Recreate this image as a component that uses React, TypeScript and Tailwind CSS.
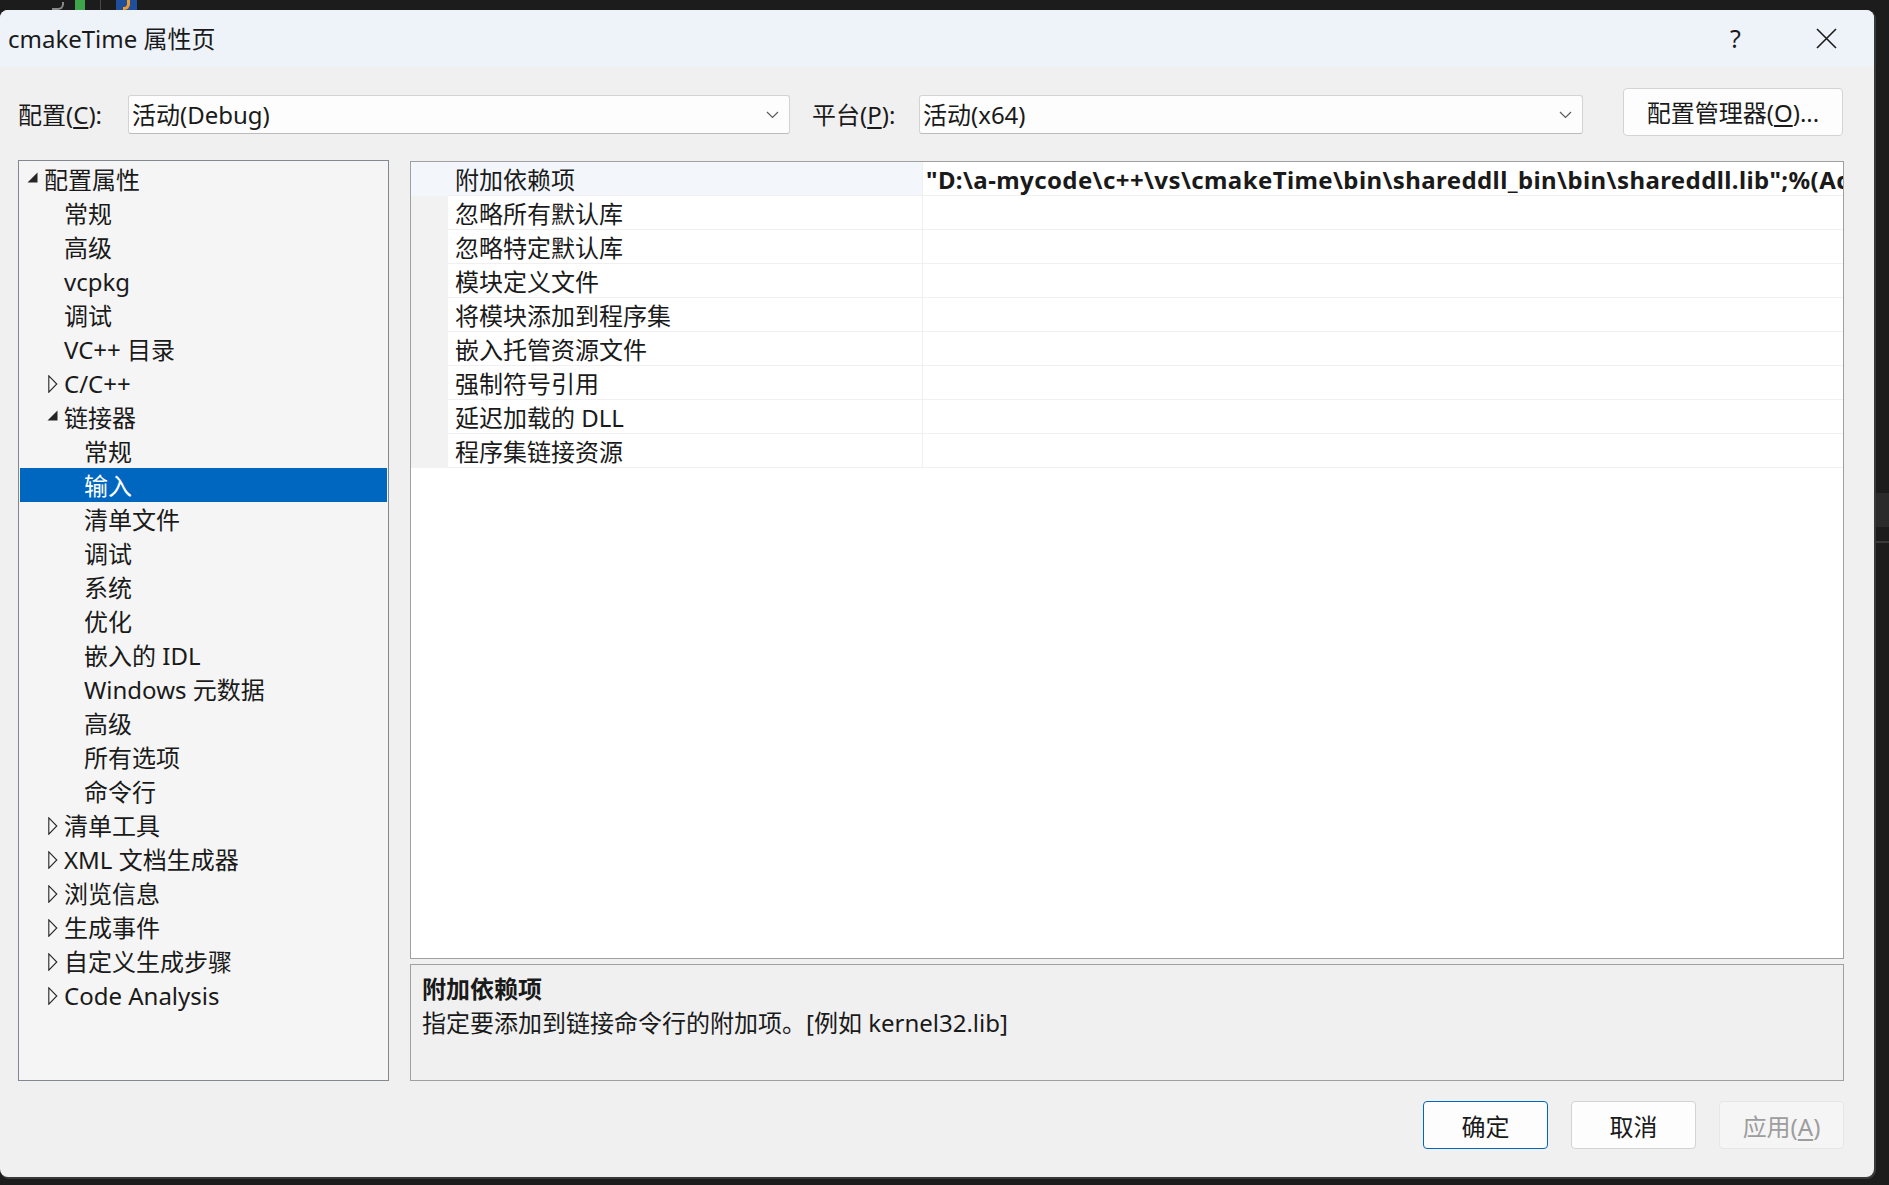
import React from "react";

type TreeItem = {
  label: string;
  level: number;
  state?: "open" | "closed";
  selected?: boolean;
};

const tree: TreeItem[] = [
  { label: "配置属性", level: 0, state: "open" },
  { label: "常规", level: 1 },
  { label: "高级", level: 1 },
  { label: "vcpkg", level: 1 },
  { label: "调试", level: 1 },
  { label: "VC++ 目录", level: 1 },
  { label: "C/C++", level: 1, state: "closed" },
  { label: "链接器", level: 1, state: "open" },
  { label: "常规", level: 2 },
  { label: "输入", level: 2, selected: true },
  { label: "清单文件", level: 2 },
  { label: "调试", level: 2 },
  { label: "系统", level: 2 },
  { label: "优化", level: 2 },
  { label: "嵌入的 IDL", level: 2 },
  { label: "Windows 元数据", level: 2 },
  { label: "高级", level: 2 },
  { label: "所有选项", level: 2 },
  { label: "命令行", level: 2 },
  { label: "清单工具", level: 1, state: "closed" },
  { label: "XML 文档生成器", level: 1, state: "closed" },
  { label: "浏览信息", level: 1, state: "closed" },
  { label: "生成事件", level: 1, state: "closed" },
  { label: "自定义生成步骤", level: 1, state: "closed" },
  { label: "Code Analysis", level: 1, state: "closed" },
];

const props = [
  "附加依赖项",
  "忽略所有默认库",
  "忽略特定默认库",
  "模块定义文件",
  "将模块添加到程序集",
  "嵌入托管资源文件",
  "强制符号引用",
  "延迟加载的 DLL",
  "程序集链接资源",
];

const indent = ["pl-[4px]", "pl-[24px]", "pl-[44px]"];

function Chevron() {
  return (
    <svg width="13" height="8" viewBox="0 0 13 8" className="shrink-0">
      <path d="M1 1 L6.5 6.5 L12 1" fill="none" stroke="#5c5c5c" strokeWidth="1.2" />
    </svg>
  );
}

function Toggle({ state, selected }: { state?: "open" | "closed"; selected?: boolean }) {
  const c = selected ? "#ffffff" : "#262626";
  return (
    <div className="w-[20px] h-full flex items-center shrink-0">
      {state === "open" && (
        <svg width="11" height="11" viewBox="0 0 11 11" className="ml-[3px] mt-[-3px]">
          <path d="M10.5 0.5 L10.5 10.5 L0.5 10.5 Z" fill={c} />
        </svg>
      )}
      {state === "closed" && (
        <svg width="10" height="18" viewBox="0 0 10 18" className="ml-[4px] mt-[2px]">
          <path d="M0.8 0.8 L8.8 9 L0.8 17.2 Z" fill="none" stroke={c} strokeWidth="1.1" />
        </svg>
      )}
    </div>
  );
}

export default function App() {
  return (
    <div className="w-[1889px] h-[1185px] bg-[#1c1c1c] overflow-hidden flex flex-col font-['Noto_Sans','Noto_Sans_CJK_SC',sans-serif] text-[24px] text-[#1a1a1a]">
      {/* background window bits above the dialog */}
      <div className="h-[10px] flex items-end shrink-0">
        <div className="ml-[52px] w-[12px] h-[8px] rounded-br-[6px] border-r-[2px] border-b-[2px] border-[#8a8a8a]" />
        <div className="ml-[11px] w-[10px] h-[10px] bg-[#3ea64a]" />
        <div className="ml-[15px] w-[1px] h-[10px] bg-[#4a4a4a]" />
        <div className="ml-[15px] w-[21px] h-[10px] bg-[#1f4f9a] flex justify-center">
          <div className="w-[7px] h-[10px] rounded-br-[6px] border-r-[3px] border-b-[3px] border-[#f09a2a]" />
        </div>
      </div>

      <div className="flex flex-1 min-h-0">
        <div className="w-[1874px] h-[1167px] shrink-0 bg-[#f0f0f0] rounded-[8px] overflow-hidden flex flex-col shadow-[1px_1px_0_1px_#3a3a3a]">
          {/* title bar */}
          <div className="h-[57px] bg-[#eef2f9] flex items-center pl-[8px] pr-[2px] shrink-0">
            <span className="leading-none">cmakeTime 属性页</span>
            <div className="ml-auto flex h-full">
              <div className="w-[91px] h-full flex items-center justify-center text-[25px]">?</div>
              <div className="w-[91px] h-full flex items-center justify-center">
                <svg width="21" height="21" viewBox="0 0 21 21">
                  <path d="M1 1 L20 20 M20 1 L1 20" stroke="#1a1a1a" strokeWidth="1.6" />
                </svg>
              </div>
            </div>
          </div>

          <div className="flex-1 flex flex-col pl-[18px] pr-[30px]">
            {/* configuration row */}
            <div className="mt-[21px] h-[48px] flex items-start">
              <div className="mt-[7px] h-[39px] flex items-center">
                <span className="w-[110px] whitespace-nowrap">
                  配置(<span className="underline underline-offset-[3px]">C</span>):
                </span>
                <div className="w-[662px] h-[39px] bg-[#fdfdfd] border border-[#d3d3d3] border-b-[#bcbcbc] rounded-[3px] flex items-center pl-[3px] pr-[10px]">
                  <span className="flex-1 whitespace-nowrap">活动(Debug)</span>
                  <Chevron />
                </div>
                <span className="ml-[22px] w-[107px] whitespace-nowrap">
                  平台(<span className="underline underline-offset-[3px]">P</span>):
                </span>
                <div className="w-[664px] h-[39px] bg-[#fdfdfd] border border-[#d3d3d3] border-b-[#bcbcbc] rounded-[3px] flex items-center pl-[3px] pr-[10px]">
                  <span className="flex-1 whitespace-nowrap">活动(x64)</span>
                  <Chevron />
                </div>
              </div>
              <button className="ml-[40px] w-[220px] h-[48px] bg-[#fdfdfd] border border-[#d3d3d3] rounded-[4px] flex items-center justify-center whitespace-nowrap pt-[2px]">
                配置管理器(<span className="underline underline-offset-[3px]">O</span>)...
              </button>
            </div>

            {/* main panels */}
            <div className="mt-[24px] flex">
              <div className="w-[371px] h-[921px] shrink-0 border border-[#838790] bg-[#f5f5f5] px-[1px] pt-[1px] overflow-hidden">
                {tree.map((t, i) => (
                  <div
                    key={i}
                    className={`h-[34px] flex items-center whitespace-nowrap ${indent[t.level]} ${
                      t.selected ? "bg-[#0067c0] text-white" : ""
                    }`}
                  >
                    <Toggle state={t.state} selected={t.selected} />
                    <span className="leading-[34px] pt-[2px]">{t.label}</span>
                  </div>
                ))}
              </div>

              <div className="ml-[21px] w-[1434px] flex flex-col">
                <div className="mt-[1px] h-[798px] border border-[#a0a0a0] bg-white overflow-hidden">
                  {props.map((p, i) => (
                    <div key={i} className="h-[34px] flex">
                      <div className={`w-[37px] shrink-0 ${i === 0 ? "bg-[#f3f6fb]" : "bg-[#f2f2f2]"}`} />
                      <div
                        className={`w-[475px] shrink-0 pl-[7px] pt-[3px] border-r border-b border-[#f0f0f0] flex items-center whitespace-nowrap ${
                          i === 0 ? "bg-[#f3f6fb]" : ""
                        }`}
                      >
                        {p}
                      </div>
                      <div className="flex-1 min-w-0 pl-[3px] pt-[3px] border-b border-[#f0f0f0] flex items-center overflow-hidden">
                        {i === 0 && (
                          <span className="font-bold whitespace-nowrap tracking-[0.4px]">
                            "D:\a-mycode\c++\vs\cmakeTime\bin\shareddll_bin\bin\shareddll.lib";%(AdditionalDependencies)
                          </span>
                        )}
                      </div>
                    </div>
                  ))}
                </div>

                <div className="mt-[5px] h-[117px] border border-[#a0a0a0] bg-[#f0f0f0] pl-[11px] pt-[7px]">
                  <div className="leading-[34px] font-bold">附加依赖项</div>
                  <div className="leading-[34px]">指定要添加到链接命令行的附加项。[例如 kernel32.lib]</div>
                </div>
              </div>
            </div>

            {/* dialog buttons */}
            <div className="mt-[20px] flex justify-end gap-[23px]">
              <button className="w-[125px] h-[48px] pt-[3px] bg-[#fdfdfd] border border-[#0067c0] rounded-[4px]">确定</button>
              <button className="w-[125px] h-[48px] pt-[3px] bg-[#fdfdfd] border border-[#d3d3d3] rounded-[4px]">取消</button>
              <button className="w-[125px] h-[48px] pt-[3px] bg-[#f5f5f5] border border-[#e6e6e6] rounded-[4px] text-[#9d9d9d]">
                应用(<span className="underline underline-offset-[3px]">A</span>)
              </button>
            </div>
          </div>
        </div>

        {/* background window strip at right */}
        <div className="flex-1 flex flex-col pl-[2px]">
          <div className="mt-[483px] h-[34px] bg-[#2b2b2b]" />
          <div className="mt-[14px] h-[2px] bg-[#3a3a3a]" />
        </div>
      </div>
    </div>
  );
}
